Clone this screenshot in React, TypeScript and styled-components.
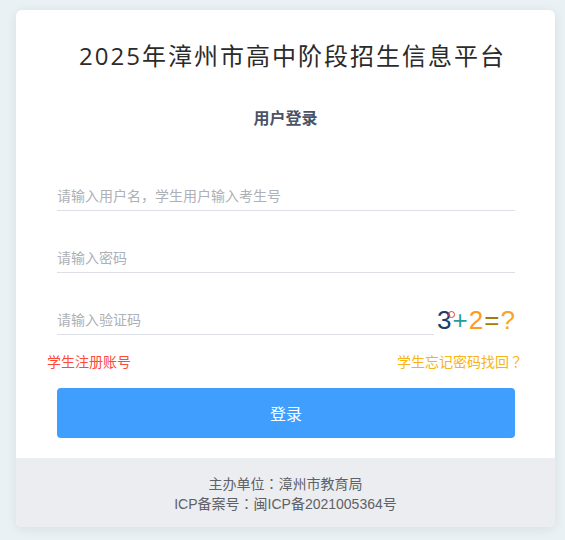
import React from "react";
import styled, { createGlobalStyle } from "styled-components";

const GlobalStyle = createGlobalStyle`
  html, body {
    margin: 0;
    padding: 0;
    background: #eaf1f5;
    font-family: "Liberation Sans", "Noto Sans CJK SC", sans-serif;
    text-spacing-trim: space-all;
  }
  * { box-sizing: border-box; }
`;

const Page = styled.div`
  width: 565px;
  height: 540px;
  padding: 10px 10px 0 16px;
`;

const Card = styled.div`
  width: 539px;
  background: #fff;
  border-radius: 6px;
  box-shadow: 0 2px 12px rgba(0, 0, 0, 0.08);
  overflow: hidden;
`;

const Title = styled.h1`
  margin: 0;
  padding: 30px 0 0 14px;
  text-align: center;
  font-family: "Open Sans", "Noto Sans CJK SC", sans-serif;
  font-weight: 400;
  font-size: 24px;
  line-height: 32px;
  letter-spacing: 2px;
  color: #2b2b2b;
`;

const SubTitle = styled.h2`
  margin: 35px 0 0;
  text-align: center;
  font-size: 16px;
  line-height: 24px;
  font-weight: 700;
  color: #4b5364;
`;

const Form = styled.div`
  display: flex;
  flex-direction: column;
  padding: 51px 40px 20px 41px;
`;

const Fields = styled.div`
  display: flex;
  flex-direction: column;
  gap: 33px;
`;

const Row = styled.div`
  display: flex;
  align-items: flex-end;
  gap: 3px;
`;

const Input = styled.input`
  flex: 1;
  min-width: 0;
  height: 29px;
  padding: 0 0 1px;
  border: none;
  border-bottom: 1px solid #dcdfe6;
  outline: none;
  font-family: inherit;
  font-size: 14px;
  color: #333;
  background: transparent;
  &::placeholder {
    color: #adb0b6;
  }
`;

const Captcha = styled.div`
  position: relative;
  width: 78px;
  height: 29px;
  display: flex;
  align-items: center;
  justify-content: space-between;
  font-family: "Liberation Sans", sans-serif;
  font-size: 26px;
  line-height: 29px;
`;

const Glyph = styled.span<{ $color: string }>`
  color: ${(p) => p.$color};
`;

const Ring = styled.span`
  position: absolute;
  left: 11px;
  top: 5px;
  width: 7px;
  height: 7px;
  border: 1px solid #e23b3b;
  border-radius: 50%;
`;

const Links = styled.div`
  display: flex;
  justify-content: space-between;
  margin: 18px -8px 0 -10px;
  font-family: "Liberation Sans", "Noto Sans CJK TC", sans-serif;
  font-size: 14px;
  line-height: 18px;
`;

const TextLink = styled.a<{ $color: string }>`
  color: ${(p) => p.$color};
  text-decoration: none;
  cursor: pointer;
`;

const Button = styled.button`
  margin-top: 17px;
  height: 50px;
  border: none;
  border-radius: 4px;
  background: #409eff;
  color: #fff;
  font-family: inherit;
  font-size: 16px;
  cursor: pointer;
`;

const Footer = styled.div`
  height: 69px;
  padding-top: 16px;
  background: #ebedf0;
  text-align: center;
  font-family: "Liberation Sans", "Noto Sans CJK TC", sans-serif;
  font-size: 14px;
  line-height: 20px;
  color: #5f6166;
`;

export default function App() {
  return (
    <>
      <GlobalStyle />
      <Page>
        <Card>
          <Title>2025年漳州市高中阶段招生信息平台</Title>
          <SubTitle>用户登录</SubTitle>
          <Form>
            <Fields>
              <Row>
                <Input placeholder="请输入用户名，学生用户输入考生号" />
              </Row>
              <Row>
                <Input type="password" placeholder="请输入密码" />
              </Row>
              <Row>
                <Input placeholder="请输入验证码" />
                <Captcha>
                  <Glyph $color="#17406e">3</Glyph>
                  <Glyph $color="#2a9d9a">+</Glyph>
                  <Glyph $color="#ff9a1a">2</Glyph>
                  <Glyph $color="#a77a10">=</Glyph>
                  <Glyph $color="#f5a623">?</Glyph>
                  <Ring />
                </Captcha>
              </Row>
            </Fields>
            <Links>
              <TextLink $color="#ff4a3a">学生注册账号</TextLink>
              <TextLink $color="#f7b416">学生忘记密码找回？</TextLink>
            </Links>
            <Button>登录</Button>
          </Form>
          <Footer>
            <div>主办单位：漳州市教育局</div>
            <div>ICP备案号：闽ICP备2021005364号</div>
          </Footer>
        </Card>
      </Page>
    </>
  );
}
